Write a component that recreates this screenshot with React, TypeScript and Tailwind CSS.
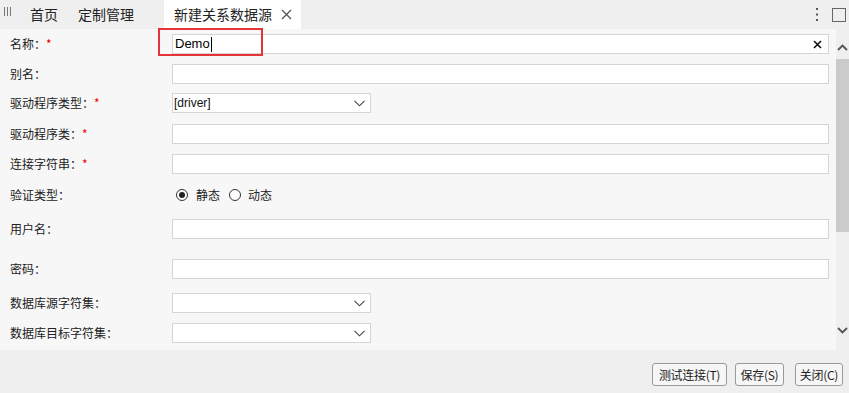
import React from 'react'

const font = { fontFamily: '"Microsoft YaHei", "Noto Sans CJK SC", "Liberation Sans", sans-serif' }

function Req() {
  return <span className="text-[#e00]">*</span>
}

function Label({ children, req }: { children: React.ReactNode; req?: boolean }) {
  return (
    <div className="w-[162px] shrink-0 text-[12px] text-[#222]">
      {children}：{req && <Req />}
    </div>
  )
}

function TextBox({ children }: { children?: React.ReactNode }) {
  return (
    <div className="flex h-[20px] flex-1 items-center border border-[#d5d5d5] bg-white px-[2px]">{children}</div>
  )
}

function Chevron() {
  return (
    <svg width="11" height="7" viewBox="0 0 11 7" className="ml-auto mr-[5px]">
      <path d="M0.5 0.8 L5.5 5.8 L10.5 0.8" fill="none" stroke="#444" strokeWidth="1.1" />
    </svg>
  )
}

function SelectBox({ value }: { value?: string }) {
  return (
    <div className="flex h-[20px] w-[199px] items-center border border-[#d5d5d5] bg-white pl-[1px]">
      <span className="text-[12px] text-[#111]" style={{ fontFamily: '"Liberation Sans", Arial, sans-serif' }}>
        {value}
      </span>
      <Chevron />
    </div>
  )
}

function Radio({ checked }: { checked?: boolean }) {
  return (
    <span className="flex h-[12px] w-[12px] items-center justify-center rounded-full border border-[#333] bg-white">
      {checked && <span className="h-[6px] w-[6px] rounded-full bg-[#222]" />}
    </span>
  )
}

function Btn({ children, className = '' }: { children: React.ReactNode; className?: string }) {
  return (
    <button
      className={`h-[23px] rounded-[3px] border border-[#9a9a9a] bg-[#f6f6f6] px-0 text-[12px] leading-none tracking-[-0.3px] text-[#222] ${className}`}
    >
      {children}
    </button>
  )
}

export default function App() {
  return (
    <div className="flex h-[393px] w-[849px] flex-col bg-[#efefef] text-[#222]" style={font}>
      {/* tabs */}
      <div className="flex h-[29px] shrink-0 items-stretch">
        <div className="flex w-[30px] items-start pl-[4px] pt-[7px]">
          <svg width="7" height="9" viewBox="0 0 7 9">
            <path d="M0.5 0 V9 M3.5 0 V9 M6.5 0 V9" stroke="#777" strokeWidth="1" />
          </svg>
        </div>
        <div className="flex items-center text-[14px]">首页</div>
        <div className="ml-[20px] flex items-center text-[14px]">定制管理</div>
        <div className="ml-[30px] flex w-[137px] items-center bg-white pl-[10px] text-[14px]">
          新建关系数据源
          <svg width="11" height="11" viewBox="0 0 11 11" className="ml-[9px]">
            <path d="M1 1 L10 10 M10 1 L1 10" stroke="#555" strokeWidth="1.3" />
          </svg>
        </div>
        <div className="ml-auto flex items-center gap-[13px] pr-[3px]">
          <svg width="4" height="15" viewBox="0 0 4 15">
            <rect x="1" y="1" width="2" height="2" fill="#555" />
            <rect x="1" y="6.5" width="2" height="2" fill="#555" />
            <rect x="1" y="12" width="2" height="2" fill="#555" />
          </svg>
          <span className="h-[14px] w-[14px] border border-[#666]" />
        </div>
      </div>

      {/* body */}
      <div className="flex h-[321px] shrink-0">
        <div className="relative flex flex-1 flex-col bg-[#f7f7f7] pl-[10px] pr-[7px] pt-[5px]">
          <div className="flex h-[20px] items-center">
            <Label req>名称</Label>
            <TextBox>
              <span className="text-[13px] text-black" style={{ fontFamily: '"Liberation Sans", Arial, sans-serif' }}>
                Demo
              </span>
              <span className="ml-[1px] h-[15px] w-[1px] bg-black" />
              <svg width="9" height="9" viewBox="0 0 9 9" className="ml-auto mr-[4px]">
                <path d="M1 1 L8 8 M8 1 L1 8" stroke="#111" strokeWidth="1.6" />
              </svg>
            </TextBox>
          </div>
          <div className="mt-[10px] flex h-[20px] items-center">
            <Label>别名</Label>
            <TextBox />
          </div>
          <div className="mt-[9px] flex h-[20px] items-center">
            <Label req>驱动程序类型</Label>
            <SelectBox value="[driver]" />
          </div>
          <div className="mt-[11px] flex h-[20px] items-center">
            <Label req>驱动程序类</Label>
            <TextBox />
          </div>
          <div className="mt-[10px] flex h-[20px] items-center">
            <Label req>连接字符串</Label>
            <TextBox />
          </div>
          <div className="mt-[11px] flex h-[20px] items-center">
            <Label>验证类型</Label>
            <div className="flex items-center pl-[4px] text-[12px]">
              <Radio checked />
              <span className="ml-[8px]">静态</span>
              <span className="ml-[9px]">
                <Radio />
              </span>
              <span className="ml-[7px]">动态</span>
            </div>
          </div>
          <div className="mt-[14px] flex h-[20px] items-center">
            <Label>用户名</Label>
            <TextBox />
          </div>
          <div className="mt-[20px] flex h-[20px] items-center">
            <Label>密码</Label>
            <TextBox />
          </div>
          <div className="mt-[14px] flex h-[20px] items-center">
            <Label>数据库源字符集</Label>
            <SelectBox />
          </div>
          <div className="mt-[10px] flex h-[20px] items-center">
            <Label>数据库目标字符集</Label>
            <SelectBox />
          </div>

          {/* highlight */}
          <div className="pointer-events-none absolute left-[158px] top-[-1px] h-[28px] w-[105px] border-2 border-[#e5333a]" />
        </div>

        {/* scrollbar */}
        <div className="flex w-[13px] flex-col items-center bg-[#efefef]">
          <svg width="11" height="7" viewBox="0 0 11 7" className="mt-[15px]">
            <path d="M1 6 L5.5 1.5 L10 6" fill="none" stroke="#555" strokeWidth="1.8" />
          </svg>
          <div className="mt-[8px] h-[173px] w-[13px] bg-[#cbcbcb]" />
          <div className="flex-1" />
          <svg width="11" height="7" viewBox="0 0 11 7" className="mb-[16px]">
            <path d="M1 1 L5.5 5.5 L10 1" fill="none" stroke="#555" strokeWidth="1.8" />
          </svg>
        </div>
      </div>

      {/* footer */}
      <div className="flex flex-1 items-start justify-end pr-[6px] pt-[13px]">
        <Btn className="w-[75px]">测试连接(T)</Btn>
        <Btn className="ml-[8px] w-[49px]">保存(S)</Btn>
        <Btn className="ml-[11px] w-[48px]">关闭(C)</Btn>
      </div>
    </div>
  )
}
